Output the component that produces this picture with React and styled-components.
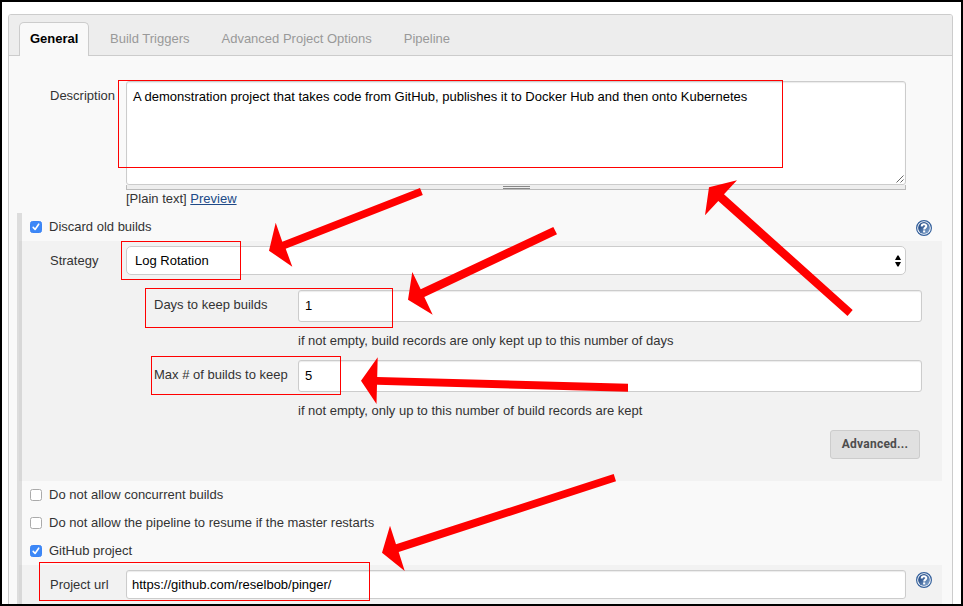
import React from "react";
import styled, { createGlobalStyle, css } from "styled-components";

const Global = createGlobalStyle`
  *, *::before, *::after { box-sizing: border-box; }
  body { margin: 0; background: #fff; }
`;

const Frame = styled.div`
  position: relative;
  width: 963px;
  height: 606px;
  border: 2px solid #000;
  padding: 12px 8px 0 6px;
  background: #fff;
  overflow: hidden;
  font-family: "Liberation Sans", Arial, Helvetica, sans-serif;
  font-size: 13px;
  line-height: 16px;
  color: #333;
`;

const Panel = styled.div`
  height: 620px;
  border: 1px solid #ccc;
  border-radius: 3px;
  background: #f9f9f9;
  overflow: hidden;
`;

const TabBar = styled.nav`
  display: flex;
  align-items: flex-end;
  height: 41px;
  padding-left: 10px;
  background: #ededed;
  border-bottom: 1px solid #ccc;
`;

const Tab = styled.a`
  height: 33px;
  padding: 9px 16px 0;
  color: #999;
  white-space: nowrap;
  ${(p) =>
    p.$active &&
    css`
      width: 70px;
      height: 34px;
      margin: 0 5px -1px 0;
      padding: 8px 0 0 10px;
      border: 1px solid #ccc;
      border-bottom: 0;
      border-radius: 5px 5px 0 0;
      background: #f9f9f9;
      color: #000;
      font-weight: bold;
    `}
`;

const DescriptionRow = styled.div`
  display: flex;
  height: 157px;
  padding: 25px 0 0 41px;
`;

const Label = styled.label`
  flex: none;
  width: ${(p) => p.$width || 76}px;
  padding-top: ${(p) => p.$top || 0}px;
  white-space: nowrap;
`;

const DescriptionColumn = styled.div`
  width: 780px;
`;

const TextArea = styled.div`
  display: flex;
  justify-content: space-between;
  height: 104px;
  padding: 7px 1px 1px 6px;
  border: 1px solid #ccc;
  border-radius: 3px;
  box-shadow: inset 0 1px 1px rgba(0, 0, 0, 0.08);
  background: #fff;
  color: #000;
`;

const ResizeGrip = styled.svg`
  align-self: flex-end;
`;

const DragBar = styled.div`
  display: flex;
  justify-content: center;
  height: 5px;
  border: 1px solid #bbb;
  border-top: 0;
  background: #eee;
`;

const DragHandle = styled.div`
  width: 27px;
  height: 3px;
  margin-top: 1px;
  border-top: 1px solid #888;
  border-bottom: 1px solid #888;
`;

const FormatLine = styled.div`
  margin-top: 1px;
`;

const PreviewLink = styled.a`
  color: #204a87;
  text-decoration: underline;
`;

const Options = styled.div`
  margin-left: 8px;
  width: 925px;
  border-left: 5px solid #ddd;
`;

const OptionRow = styled.div`
  display: flex;
  align-items: center;
  height: 28px;
  padding: 0 10px 0 8px;
`;

const OptionText = styled.span`
  flex: 1;
  padding-left: 7px;
`;

const Box = styled.span`
  display: flex;
  align-items: center;
  justify-content: center;
  width: 12px;
  height: 12px;
  border: 1px solid ${(p) => (p.$checked ? "#3b84f5" : "#aaa")};
  border-radius: 2.5px;
  background: ${(p) => (p.$checked ? "#3d88f7" : "#fff")};
`;

const Section = styled.div`
  height: ${(p) => p.$height}px;
  margin-left: -3px;
  border-left: 3px solid #d8d8d8;
  padding: 5px 10px 0 28px;
  background: #f2f2f2;
`;

const Field = styled.div`
  display: flex;
  margin-left: ${(p) => p.$indent || 0}px;
  margin-top: ${(p) => p.$gap || 0}px;
`;

const Control = styled.div`
  display: flex;
  align-items: center;
  justify-content: space-between;
  width: ${(p) => p.$width}px;
  height: ${(p) => p.$height}px;
  padding: 0 4px 0 ${(p) => p.$pad}px;
  border: 1px solid #ccc;
  border-radius: ${(p) => p.$radius || 3}px;
  box-shadow: ${(p) => (p.$radius ? "none" : "inset 0 1px 1px rgba(0,0,0,.08)")};
  background: #fff;
  color: #000;
`;

const Hint = styled.div`
  margin: 11px 0 0 248px;
`;

const Actions = styled.div`
  display: flex;
  justify-content: flex-end;
  margin-top: 11px;
  padding-right: 12px;
`;

const Button = styled.button`
  width: 90px;
  height: 29px;
  padding: 0 0 2px;
  border: 1px solid #ccc;
  border-radius: 3px;
  background: #e0e0e0;
  color: #4d4d4d;
  font: bold 12px Roboto, "Liberation Sans", sans-serif;
  letter-spacing: 0.25px;
`;

const HelpSvg = styled.svg`
  flex: none;
  display: block;
  margin: ${(p) => p.$margin || "0"};
`;

const Annotations = styled.svg`
  position: absolute;
  left: -2px;
  top: -2px;
  pointer-events: none;
`;

function Check({ checked }) {
  return (
    <Box $checked={checked}>
      {checked && (
        <svg width="10" height="10" viewBox="0 0 10 10">
          <path d="M2.2 5.4 4.1 7.5 7.7 2.2" fill="none" stroke="#fff" strokeWidth="1.6" strokeLinecap="round" strokeLinejoin="round" />
        </svg>
      )}
    </Box>
  );
}

function Help({ margin }) {
  return (
    <HelpSvg $margin={margin} width="16" height="16" viewBox="0 0 16 16">
      <defs>
        <linearGradient id="helpFill" x1="0" y1="0" x2="1" y2="1">
          <stop offset="0.3" stopColor="#2f568f" />
          <stop offset="1" stopColor="#8fb0d6" />
        </linearGradient>
      </defs>
      <circle cx="8" cy="8" r="7.4" fill="#fff" stroke="#34609c" strokeWidth="1.2" />
      <circle cx="8" cy="8" r="5.9" fill="url(#helpFill)" />
      <path d="M5.7 6.4C5.7 3.5 10.3 3.6 10.3 6.1C10.3 7.7 8.2 7.6 8.2 9.6" fill="none" stroke="#fff" strokeWidth="2" />
      <rect x="7.1" y="10.4" width="2.1" height="2" fill="#fff" />
    </HelpSvg>
  );
}

const tabs = ["Build Triggers", "Advanced Project Options", "Pipeline"];

// Highlight rectangles: x, y, width, height.
const boxes = [
  [118, 80, 664, 87],
  [121, 241, 119, 38],
  [145, 288, 247, 39],
  [151, 356, 189, 38],
  [39, 562, 330, 38],
];

const arrows = [
  "269,250.7 275.7,222.7 282.3,241.7 420,188 422.8,195 285.7,248.7 292.3,266.7",
  "408,299.7 412.3,272 420.7,289.3 553.3,227 557,234.3 424.3,297 432.7,314.7",
  "361,380.7 377.7,357.3 377.2,377 628,383.7 628,391.8 377,384.7 376.5,404",
  "709,187.3 737,180.3 724,194.3 852.7,310 847.5,316 718.3,201 705,215.3",
  "382,552.7 390,525.7 396,544.3 613.7,474 616,481.3 398.7,552 404.7,571",
];

export default function App() {
  return (
    <Frame>
      <Global />
      <Panel>
        <TabBar>
          <Tab $active>General</Tab>
          {tabs.map((t) => (
            <Tab key={t}>{t}</Tab>
          ))}
        </TabBar>
        <DescriptionRow>
          <Label $top={7}>Description</Label>
          <DescriptionColumn>
            <TextArea>
              <span>A demonstration project that takes code from GitHub, publishes it to Docker Hub and then onto Kubernetes</span>
              <ResizeGrip width="8" height="8" viewBox="0 0 8 8">
                <path d="M0.5 7.5 7.5 0.5M4.5 7.5 7.5 4.5" stroke="#555" strokeWidth="0.9" />
              </ResizeGrip>
            </TextArea>
            <DragBar>
              <DragHandle />
            </DragBar>
            <FormatLine>
              [Plain text] <PreviewLink>Preview</PreviewLink>
            </FormatLine>
          </DescriptionColumn>
        </DescriptionRow>
        <Options>
          <OptionRow>
            <Check checked />
            <OptionText>Discard old builds</OptionText>
            <Help margin="2px 0 0" />
          </OptionRow>
          <Section $height={240}>
            <Field>
              <Label $top={7}>Strategy</Label>
              <Control $width={780} $height={29} $pad={8} $radius={5}>
                <span>Log Rotation</span>
                <svg width="6" height="12" viewBox="0 0 6 12">
                  <path d="M0 5 2.4 0.5H3.6L6 5ZM0 7 2.4 11.5H3.6L6 7Z" fill="#000" />
                </svg>
              </Control>
            </Field>
            <Field $indent={104} $gap={15}>
              <Label $width={144} $top={7}>Days to keep builds</Label>
              <Control $width={624} $height={32} $pad={6}>1</Control>
            </Field>
            <Hint>if not empty, build records are only kept up to this number of days</Hint>
            <Field $indent={104} $gap={11}>
              <Label $width={144} $top={7}>Max # of builds to keep</Label>
              <Control $width={624} $height={32} $pad={6}>5</Control>
            </Field>
            <Hint>if not empty, only up to this number of build records are kept</Hint>
            <Actions>
              <Button>Advanced...</Button>
            </Actions>
          </Section>
          <OptionRow>
            <Check />
            <OptionText>Do not allow concurrent builds</OptionText>
          </OptionRow>
          <OptionRow>
            <Check />
            <OptionText>Do not allow the pipeline to resume if the master restarts</OptionText>
          </OptionRow>
          <OptionRow>
            <Check checked />
            <OptionText>GitHub project</OptionText>
          </OptionRow>
          <Section $height={60}>
            <Field>
              <Label $top={7}>Project url</Label>
              <Control $width={780} $height={29} $pad={5}>https://github.com/reselbob/pinger/</Control>
              <Help margin="2px 0 0 10px" />
            </Field>
          </Section>
        </Options>
      </Panel>
      <Annotations width="963" height="606" viewBox="0 0 963 606">
        {boxes.map(([x, y, w, h]) => (
          <rect key={`${x}-${y}`} x={x + 0.5} y={y + 0.5} width={w} height={h} fill="none" stroke="#f00" />
        ))}
        {arrows.map((points) => (
          <polygon key={points} points={points} fill="#f00" />
        ))}
      </Annotations>
    </Frame>
  );
}
